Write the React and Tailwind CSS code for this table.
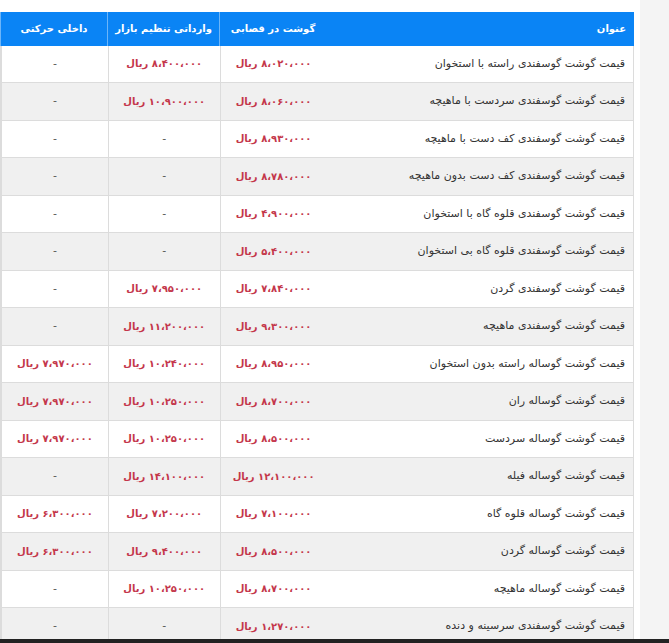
const rows = [
    ['قیمت گوشت گوسفندی راسته با استخوان', '۸،۰۲۰،۰۰۰', '۸،۴۰۰،۰۰۰', null],
    ['قیمت گوشت گوسفندی سردست با ماهیچه', '۸،۰۶۰،۰۰۰', '۱۰،۹۰۰،۰۰۰', null],
    ['قیمت گوشت گوسفندی کف دست با ماهیچه', '۸،۹۳۰،۰۰۰', null, null],
    ['قیمت گوشت گوسفندی کف دست بدون ماهیچه', '۸،۷۸۰،۰۰۰', null, null],
    ['قیمت گوشت گوسفندی قلوه گاه با استخوان', '۴،۹۰۰،۰۰۰', null, null],
    ['قیمت گوشت گوسفندی قلوه گاه بی استخوان', '۵،۴۰۰،۰۰۰', null, null],
    ['قیمت گوشت گوسفندی گردن', '۷،۸۴۰،۰۰۰', '۷،۹۵۰،۰۰۰', null],
    ['قیمت گوشت گوسفندی ماهیچه', '۹،۳۰۰،۰۰۰', '۱۱،۲۰۰،۰۰۰', null],
    ['قیمت گوشت گوساله راسته بدون استخوان', '۸،۹۵۰،۰۰۰', '۱۰،۲۴۰،۰۰۰', '۷،۹۷۰،۰۰۰'],
    ['قیمت گوشت گوساله ران', '۸،۷۰۰،۰۰۰', '۱۰،۲۵۰،۰۰۰', '۷،۹۷۰،۰۰۰'],
    ['قیمت گوشت گوساله سردست', '۸،۵۰۰،۰۰۰', '۱۰،۲۵۰،۰۰۰', '۷،۹۷۰،۰۰۰'],
    ['قیمت گوشت گوساله فیله', '۱۲،۱۰۰،۰۰۰', '۱۴،۱۰۰،۰۰۰', null],
    ['قیمت گوشت گوساله قلوه گاه', '۷،۱۰۰،۰۰۰', '۷،۲۰۰،۰۰۰', '۶،۳۰۰،۰۰۰'],
    ['قیمت گوشت گوساله گردن', '۸،۵۰۰،۰۰۰', '۹،۴۰۰،۰۰۰', '۶،۳۰۰،۰۰۰'],
    ['قیمت گوشت گوساله ماهیچه', '۸،۷۰۰،۰۰۰', '۱۰،۲۵۰،۰۰۰', null],
    ['قیمت گوشت گوسفندی سرسینه و دنده', '۱،۲۷۰،۰۰۰', null, null],
];

function PriceCell({ value, className }) {
    return (
        <div className={`flex items-center justify-center border-l border-[#dcdcdc] ${className}`}>
            {value ? (
                <span className="text-[10px] font-bold tracking-[-0.4px] text-[#c4374b]">{value} ریال</span>
            ) : (
                <span className="text-[11px] text-[#555]">-</span>
            )}
        </div>
    );
}

export default function App() {
    return (
        <div
            dir="rtl"
            className="flex h-[643px] w-[669px] flex-col overflow-hidden bg-white"
            style={{ fontFamily: '"DejaVu Sans", sans-serif' }}
        >
            <div className="flex min-h-0 flex-1">
                <div className="w-[29px] shrink-0 bg-[#f4f4f4]" />
                <div className="w-[6px] shrink-0" />
                <div className="w-[634px] shrink-0 pt-[12px]">
                    <div className="flex h-[33.5px] bg-[#0a84f5] text-[10px] font-bold text-white">
                        <div className="flex w-[308px] items-center pr-2">عنوان</div>
                        <div className="flex w-[107px] items-center justify-center border-l border-white/40">گوشت در قصابی</div>
                        <div className="flex w-[112px] items-center justify-center border-l border-white/40">وارداتی تنظیم بازار</div>
                        <div className="flex w-[107px] items-center justify-center border-l border-white/40">داخلی حرکتی</div>
                    </div>
                    <div className="border-x border-[#dcdcdc]">
                        {rows.map(([name, a, b, c], i) => (
                            <div
                                key={i}
                                className={`flex h-[37.5px] border-b border-[#dcdcdc] ${
                                    i % 2 === 1 ? 'bg-[#f0f0f0]' : 'bg-white'
                                }`}
                            >
                                <div className="flex w-[307px] items-center pr-2 text-[11px] text-[#333]">{name}</div>
                                <PriceCell value={a} className="w-[107px]" />
                                <PriceCell value={b} className="w-[112px]" />
                                <PriceCell value={c} className="w-[107px]" />
                            </div>
                        ))}
                    </div>
                </div>
            </div>
            <div className="h-[4px] shrink-0 bg-[#222]" />
        </div>
    );
}
